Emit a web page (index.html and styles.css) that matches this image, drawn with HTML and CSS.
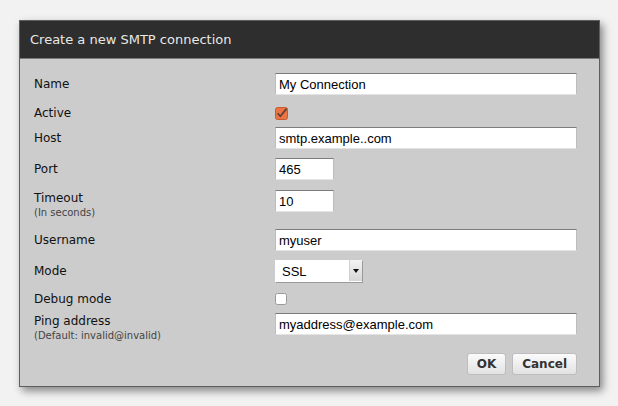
FILE: index.html
```html
<!DOCTYPE html>
<html>
<head>
<meta charset="utf-8">
<link rel="stylesheet" href="styles.css">
</head>
<body>
<div class="dialog">
  <div class="header">Create a new SMTP connection</div>
  <form class="body">
    <div class="row"><span class="label">Name</span><input class="text" value="My Connection"></div>
    <div class="row check"><span class="label">Active</span>
      <span class="box on"><svg width="13" height="13" viewBox="0 0 13 13"><rect x="0.5" y="0.5" width="12" height="12" rx="2" fill="#ec7443" stroke="#c85c30"/><path d="M2.6 6.2 L5.3 9.2 L11.6 1.6" fill="none" stroke="#5a4039" stroke-width="1.7"/></svg></span>
    </div>
    <div class="row"><span class="label">Host</span><input class="text" value="smtp.example..com"></div>
    <div class="row"><span class="label">Port</span><input class="text short" value="465"></div>
    <div class="row tall"><span class="label">Timeout<small class="sub">(In seconds)</small></span><input class="text short" value="10"></div>
    <div class="row"><span class="label">Username</span><input class="text" value="myuser"></div>
    <div class="row"><span class="label">Mode</span>
      <span class="select"><select><option>SSL</option><option>TLS</option><option>None</option></select><span class="arrow"></span></span>
    </div>
    <div class="row check tight"><span class="label">Debug mode</span>
      <span class="box"><svg width="13" height="13" viewBox="0 0 13 13"><rect x="0.5" y="0.5" width="11" height="11" rx="2" fill="#fff" stroke="#9a9a9a"/></svg></span>
    </div>
    <div class="row tall"><span class="label">Ping address<small class="sub">(Default: invalid@invalid)</small></span><input class="text" value="myaddress@example.com"></div>
    <div class="buttons"><button type="button" class="btn">OK</button><button type="button" class="btn">Cancel</button></div>
  </form>
</div>
</body>
</html>
```
FILE: styles.css
```css
html, body {
  margin: 0;
  padding: 0;
}
body {
  background: #f2f2f2;
  width: 618px;
  height: 406px;
  padding: 20px 0 0 19px;
  box-sizing: border-box;
  font-family: "DejaVu Sans", Verdana, sans-serif;
}
.dialog {
  width: 581px;
  height: 367px;
  box-sizing: border-box;
  border: 1px solid #5e5e5e;
  background: #cccccc;
  box-shadow: 3px 4px 8px rgba(0, 0, 0, 0.45);
  display: flex;
  flex-direction: column;
}
.header {
  height: 38px;
  box-sizing: border-box;
  background: #2e2e2e;
  border-bottom: 1px solid #7a7a7a;
  color: #e8e8e8;
  font-size: 13px;
  line-height: 37px;
  padding-left: 10px;
}
.body {
  margin: 0;
  padding: 14px 22px 0 14px;
  display: flex;
  flex-direction: column;
}
.row {
  display: grid;
  grid-template-columns: 241px 1fr;
  align-items: center;
  margin-top: 9px;
}
.row:first-child {
  margin-top: 0;
}
.row.check {
  margin-top: 11px;
  margin-bottom: -3px;
  height: 15px;
}
.row.check.tight {
  margin-top: 10px;
  margin-bottom: -4px;
}
.row.tall {
  align-items: start;
  margin-top: 10px;
}
.row.tall .label {
  padding-top: 1px;
}
.label {
  font-size: 12px;
  line-height: 15px;
  color: #111;
  display: flex;
  flex-direction: column;
}
.sub {
  font-size: 10px;
  line-height: 14px;
  color: #444;
}
.text {
  width: 302px;
  height: 22px;
  box-sizing: border-box;
  margin: 0;
  padding: 0 3px;
  border: 1px solid;
  border-color: #7c7c7c #bdbdbd #e4e4e4 #bdbdbd;
  background: #fff;
  font-family: "Liberation Sans", Arial, sans-serif;
  font-size: 13px;
  color: #000;
  outline: none;
}
.text.short {
  width: 59px;
}
.box {
  display: flex;
  width: 13px;
  height: 13px;
}
.select {
  position: relative;
  display: block;
  width: 87px;
  height: 22px;
  box-shadow: 1px 1px 0 #9a9a9a;
}
.select select {
  -webkit-appearance: none;
  appearance: none;
  width: 87px;
  height: 22px;
  margin: 0;
  border: none;
  background: #fff;
  padding: 0 0 0 7px;
  font-family: "Liberation Sans", Arial, sans-serif;
  font-size: 13px;
  color: #000;
  outline: none;
}
.arrow {
  position: absolute;
  right: 0;
  top: 0;
  width: 12px;
  height: 21px;
  background: linear-gradient(#f4f4f4, #d6d6d6);
  border-left: 1px solid #d0d0d0;
  pointer-events: none;
}
.arrow::after {
  content: "";
  position: absolute;
  left: 3px;
  top: 9px;
  border-left: 3px solid transparent;
  border-right: 3px solid transparent;
  border-top: 4px solid #111;
}
.buttons {
  display: flex;
  justify-content: flex-end;
  gap: 6px;
  margin-top: 10px;
}
.btn {
  height: 22px;
  margin: 0;
  padding: 0 9px;
  box-sizing: border-box;
  border: 1px solid #bdbdbd;
  border-radius: 3px;
  background: linear-gradient(#fbfbfb, #e2e2e2);
  font-family: "DejaVu Sans", Verdana, sans-serif;
  font-weight: bold;
  font-size: 12px;
  color: #333;
}
```
